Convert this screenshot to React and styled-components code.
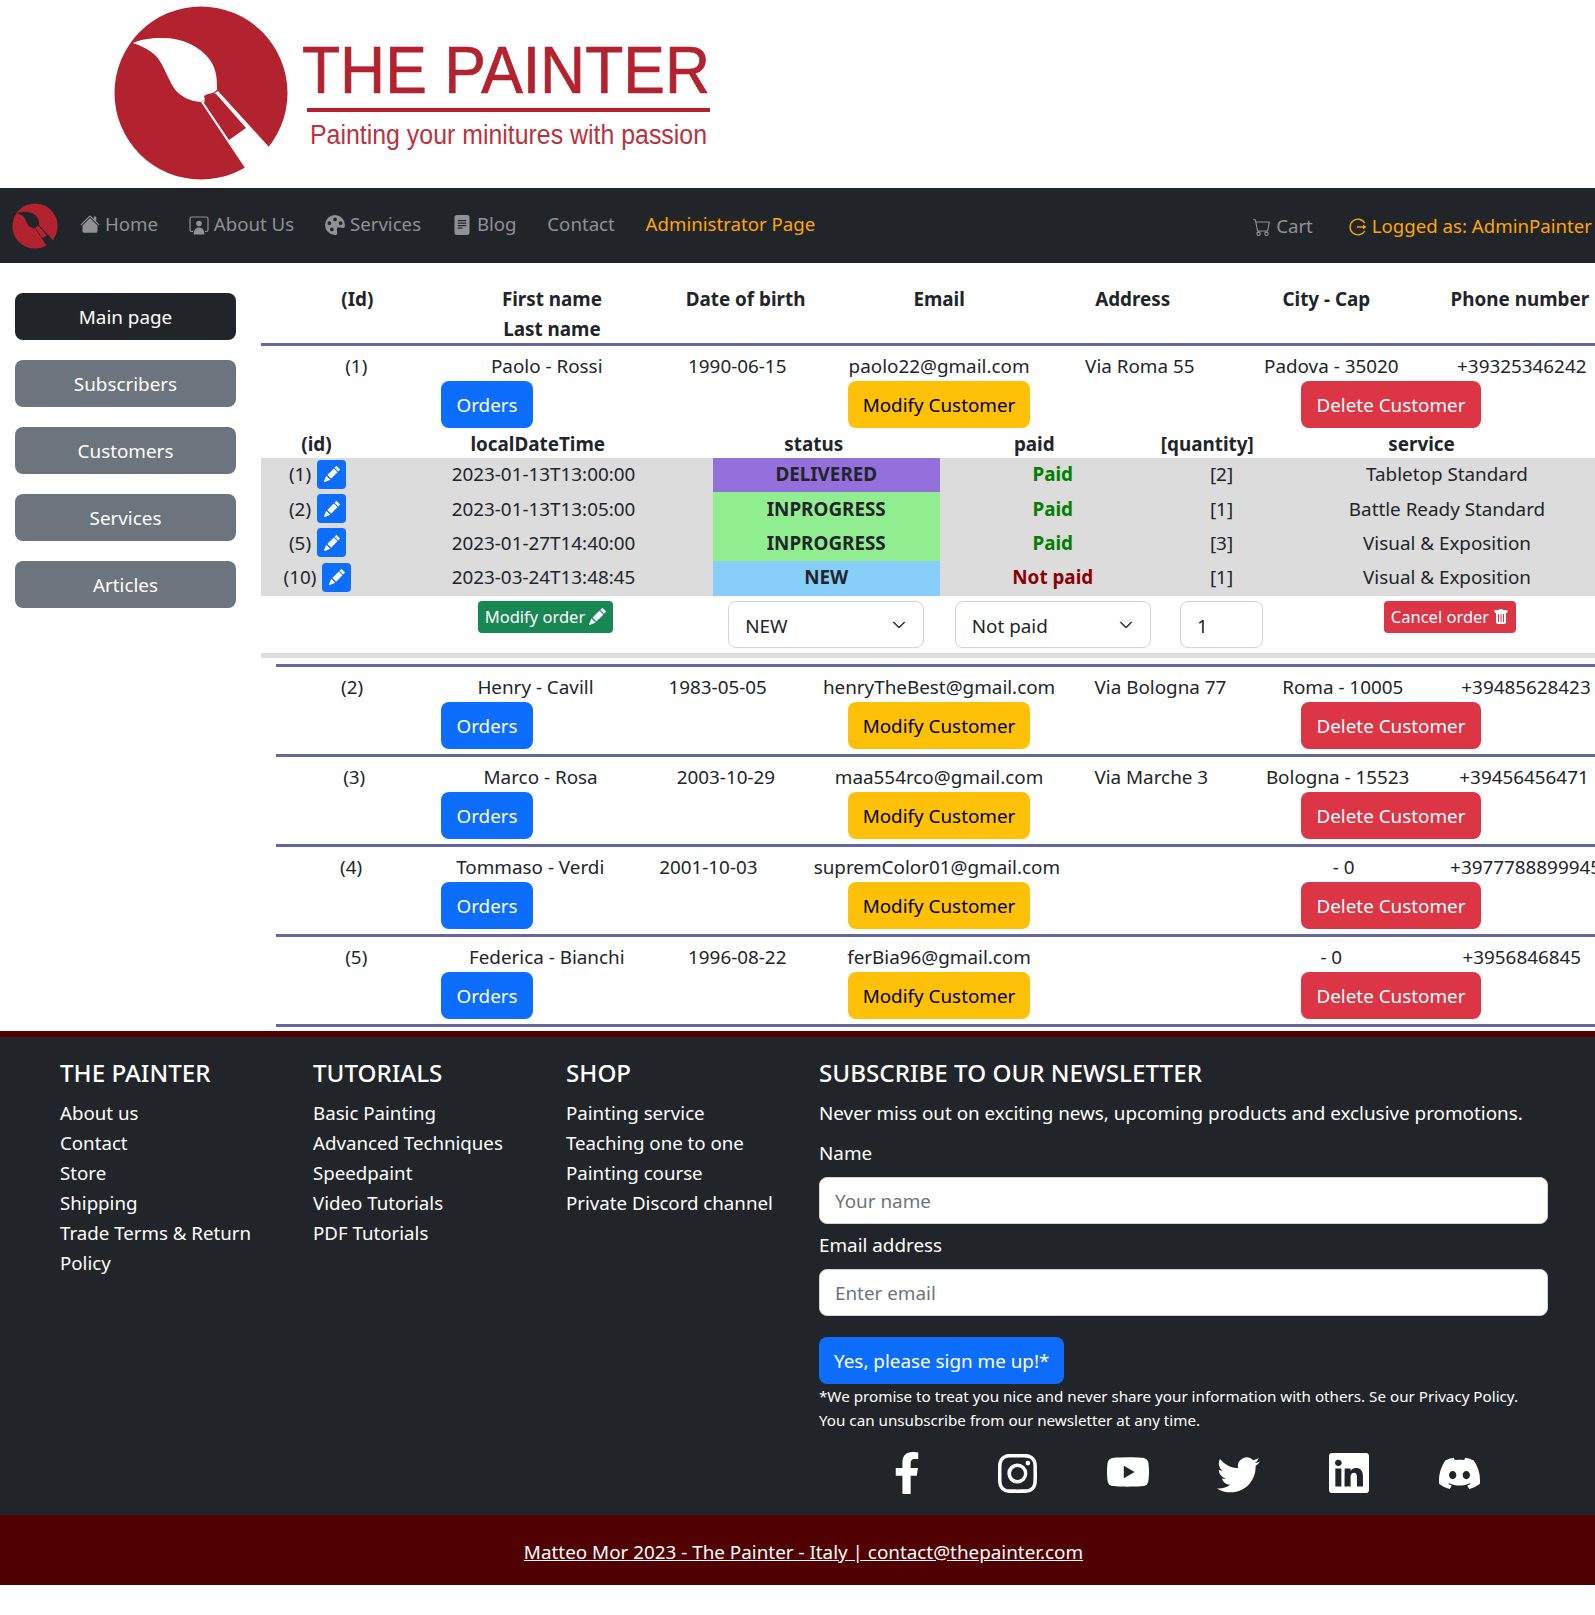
import React from 'react';
import styled, { createGlobalStyle } from 'styled-components';
import {
  BsHouseFill, BsPaletteFill, BsFileTextFill, BsCart,
  BsPencilFill, BsTrashFill, BsInstagram, BsYoutube, BsTwitter, BsLinkedin, BsDiscord, BsChevronDown,
} from 'react-icons/bs';
import { FaFacebookF } from 'react-icons/fa';

const Global = createGlobalStyle`
  html, body { margin: 0; padding: 0; background: #fff; }
  body { font-family: "Noto Sans", "Open Sans", sans-serif; font-size: 18.85px; line-height: 30px; color: #212529; }
  * { box-sizing: border-box; }
`;

const Page = styled.div`
  width: 1595px;
  height: 1615px;
  overflow: hidden;
`;

/* ---------- header ---------- */
const Brand = styled.header`
  height: 188px;
  padding-left: 100px;
`;
const LogoSvg = styled.svg`
  display: block;
`;
const LogoTitle = styled.text`
  font-family: "Liberation Sans", Arial, sans-serif;
  font-size: 66px;
  fill: #b2222f;
  stroke: #b2222f;
  stroke-width: 0.7px;
`;
const LogoTag = styled.text`
  font-family: "Liberation Sans", Arial, sans-serif;
  font-size: 27px;
  fill: #b2222f;
  opacity: 0.92;
`;

function BrushMark({ cut }) {
  return (
    <g>
      <circle cx="101" cy="93" r="86.5" fill="#b2222f" />
      <path
        d="M33 43 C45 38 55 38 63 38 C82 38 100 46 110 60 C117 70 117 80 117 90 L101 102 C90 101 80 97 74 88 C67 77 64 66 57 57 C50 50 42 46 33 43 Z"
        fill={cut}
      />
      <path d="M101 102 L118 91 L168 146 L205 185 L190 200 L145 168 Z" fill={cut} />
      <path
        d="M105 99 C103 96 105 95 108 94 L113 93 C115 93 116 94 117 95 L146 128 L129 140 L104 103 Z"
        fill="#b2222f"
      />
    </g>
  );
}

const ExitMark = () => (
  <svg width="18" height="18" viewBox="0 0 18 18" fill="none" stroke="currentColor" strokeWidth="1.4">
    <path d="M15.8 5 A7.9 7.9 0 1 0 15.8 13" />
    <path d="M8 9 H16.5" />
    <path d="M14 7 L16.5 9 L14 11" fill="currentColor" strokeWidth="1" />
  </svg>
);

const ProfileMark = () => (
  <svg width="20" height="20" viewBox="0 0 20 20" fill="currentColor">
    <path
      d="M4 16.5 H2.8 C1.8 16.5 1 15.7 1 14.7 V3.8 C1 2.8 1.8 2 2.8 2 H17.2 C18.2 2 19 2.8 19 3.8 V14.7 C19 15.7 18.2 16.5 17.2 16.5 H16"
      fill="none"
      stroke="currentColor"
      strokeWidth="1.2"
    />
    <circle cx="10" cy="8.5" r="2.8" />
    <path d="M4.6 19.5 C4.8 14.6 7 12.6 10 12.6 C13 12.6 15.2 14.6 15.4 19.5 Z" />
  </svg>
);

/* ---------- nav ---------- */
const Nav = styled.nav`
  height: 75px;
  background: #212529;
  display: flex;
  align-items: center;
  padding: 0 3px 0 12px;
  font-size: 18.65px;
`;
const NavMark = styled.svg`
  flex: none;
  margin-right: 22px;
`;
const NavLinks = styled.div`
  display: flex;
  align-items: center;
  gap: 30.8px;
  margin-bottom: 4px;
`;
const NavRight = styled.div`
  margin-left: auto;
  display: flex;
  align-items: center;
  gap: 36px;
`;
const NavLink = styled.a`
  display: flex;
  align-items: center;
  gap: 5px;
  color: ${(p) => (p.$accent ? '#ffa500' : '#8f9194')};
  white-space: nowrap;
`;
const NavIconSlot = styled.span`
  display: flex;
  margin-top: ${(p) => p.$drop || 0}px;
`;

/* ---------- main ---------- */
const Main = styled.main`
  display: flex;
  height: 768px;
`;
const Sidebar = styled.aside`
  flex: 0 0 261px;
  display: flex;
  flex-direction: column;
  gap: 20px;
  padding: 30px 25px 0 15px;
`;
const SideButton = styled.button`
  height: 47px;
  border: 0;
  border-radius: 8px;
  font: inherit;
  color: #fff;
  background: ${(p) => (p.$active ? '#212529' : '#6c757d')};
`;
const Content = styled.section`
  flex: 0 0 1356px;
  padding-top: 21px;
`;
const Cols = styled.div`
  display: grid;
  grid-template-columns: ${(p) => p.$cols};
`;
const HeadRow = styled(Cols)`
  margin-bottom: -1px;
`;
const Cell = styled.div`
  display: flex;
  justify-content: center;
  align-items: center;
  white-space: nowrap;
  min-width: 0;
`;
const HeadCell = styled.div`
  text-align: center;
  font-weight: 700;
  white-space: nowrap;
`;
const Rule = styled.div`
  height: 3px;
  background: #6466a6;
  margin-left: ${(p) => p.$inset}px;
  margin-right: -10px;
`;
const CustomerRow = styled.div`
  padding: 5px 0 5px;
`;
const ActionRow = styled.div`
  display: grid;
  grid-template-columns: repeat(3, 452px);
  justify-items: center;
`;
const LgButton = styled.button`
  height: 47px;
  padding: 0 15px;
  border: 0;
  border-radius: 8px;
  font: inherit;
  white-space: nowrap;
  color: ${(p) => (p.$tone === 'warn' ? '#000' : '#fff')};
  background: ${(p) => ({ blue: '#0d6efd', warn: '#ffc107', red: '#dc3545' }[p.$tone])};
`;

/* orders */
const OrdersHead = styled(Cols)`
  height: 30px;
  padding-top: 1px;
`;
const OrderRows = styled.div`
  background: #dcdcdc;
`;
const OrderRow = styled(Cols)`
  height: 34.4px;
  & > * { padding-bottom: 2px; }
`;
const IdGroup = styled.div`
  display: flex;
  align-items: center;
  justify-content: center;
  gap: 6px;
`;
const PencilButton = styled.button`
  width: 29px;
  height: 29px;
  border: 0;
  border-radius: 4px;
  background: #0d6efd;
  color: #fff;
  display: flex;
  align-items: center;
  justify-content: center;
  padding: 0;
`;
const StatusCell = styled(Cell)`
  font-weight: 700;
  background: ${(p) => ({ DELIVERED: '#9370db', INPROGRESS: '#90ee90', NEW: '#87cefa' }[p.$status])};
`;
const PaidCell = styled(Cell)`
  font-weight: 700;
  color: ${(p) => (p.$paid ? '#008000' : '#8b0000')};
`;
const EditRow = styled(Cols)`
  height: 57.4px;
  padding-top: 5px;
  align-items: start;
`;
const SmallButton = styled.button`
  display: flex;
  align-items: center;
  gap: 4px;
  height: 32px;
  padding: 0 7px;
  margin-left: ${(p) => p.$shift || 0}px;
  border: 0;
  border-radius: 4px;
  font: inherit;
  font-size: 16.5px;
  color: #fff;
  white-space: nowrap;
  background: ${(p) => (p.$tone === 'red' ? '#dc3545' : '#198754')};
`;
const SelectWrap = styled.div`
  position: relative;
  width: ${(p) => p.$w}px;
  height: 47px;
`;
const Select = styled.select`
  appearance: none;
  width: 100%;
  height: 100%;
  padding: 3px 16px 0;
  background: #fff;
  border: 1px solid #ced4da;
  border-radius: 8px;
  font: inherit;
  color: #212529;
`;
const Caret = styled.span`
  position: absolute;
  right: 18px;
  top: 9px;
  pointer-events: none;
  color: #343a40;
`;
const QtyInput = styled.input`
  width: 83px;
  height: 47px;
  padding: 3px 16px 0;
  border: 1px solid #ced4da;
  border-radius: 8px;
  font: inherit;
  color: #212529;
`;
const Band = styled.div`
  height: 5px;
  background: #dcdcdc;
  margin: 0 -10px 1.5px 0;
`;

/* ---------- footer ---------- */
const Footer = styled.footer`
  height: 484px;
  background: #212529;
  border-top: 6px solid #500000;
  color: #fff;
  padding: 19px 47px 0 60px;
  display: grid;
  grid-template-columns: 253px 253px 253px 1fr;
`;
const FootCol = styled.div`
  padding-right: 24px;
`;
const FootTitle = styled.h5`
  margin: 0;
  font-size: 24.2px;
  font-weight: 500;
  line-height: 33px;
  white-space: nowrap;
`;
const FootLinks = styled.ul`
  list-style: none;
  margin: 9px 0 0;
  padding: 0;
  font-size: 18.7px;
`;
const NewsCol = styled.div``;
const NewsText = styled.p`
  margin: 9px 0 0;
  white-space: nowrap;
`;
const TextField = styled.input`
  display: block;
  width: 100%;
  height: 47px;
  margin-top: 9px;
  padding: 1px 15px 0;
  background: #fff;
  border: 1px solid #ced4da;
  border-radius: 8px;
  font: inherit;
  &::placeholder { color: #6c757d; opacity: 1; }
`;
const FieldLabel = styled.label`
  display: block;
  margin-top: 10px;
  height: 30px;
  ${TextField} + & { margin-top: 6px; }
`;
const SignUp = styled(LgButton)`
  display: block;
  margin-top: 21px;
`;
const Fine = styled.p`
  margin: 0;
  font-size: 15.2px;
  line-height: 24px;
  white-space: nowrap;
`;
const Social = styled.div`
  display: flex;
  justify-content: flex-start;
  margin-top: 20px;
  padding-left: 33px;
`;
const SocialSlot = styled.a`
  flex: 0 0 110.5px;
  width: 110.5px;
  height: 42px;
  display: flex;
  align-items: center;
  justify-content: center;
  color: #fff;
`;
const Legal = styled.div`
  height: 70px;
  background: #500000;
  color: #fff;
  display: flex;
  align-items: center;
  justify-content: center;
  padding: 3px 0 0 12px;
`;
const LegalLink = styled.a`
  color: #fff;
  text-decoration: underline;
`;

/* ---------- data ---------- */
const K = 1.0297;
const colsFromCenters = (centers, left = 253.5) => {
  let edge = left;
  return centers
    .map((c) => {
      const w = 2 * (c - edge);
      edge += w;
      return `${(w * K).toFixed(1)}px`;
    })
    .join(' ');
};

const customers = [
  { id: 1, name: 'Paolo - Rossi', dob: '1990-06-15', email: 'paolo22@gmail.com', addr: 'Via Roma 55', city: 'Padova - 35020', phone: '+39325346242', centers: [346, 531, 716, 912, 1107, 1293, 1478] },
  { id: 2, name: 'Henry - Cavill', dob: '1983-05-05', email: 'henryTheBest@gmail.com', addr: 'Via Bologna 77', city: 'Roma - 10005', phone: '+39485628423', centers: [342, 520, 697, 912, 1127, 1304, 1482] },
  { id: 3, name: 'Marco - Rosa', dob: '2003-10-29', email: 'maa554rco@gmail.com', addr: 'Via Marche 3', city: 'Bologna - 15523', phone: '+39456456471', centers: [344, 525, 705, 912, 1118, 1299, 1480] },
  { id: 4, name: 'Tommaso - Verdi', dob: '2001-10-03', email: 'supremColor01@gmail.com', addr: '', city: ' - 0', phone: '+39777888999451', centers: [341, 515, 688, 910, 1130, 1305, 1487] },
  { id: 5, name: 'Federica - Bianchi', dob: '1996-08-22', email: 'ferBia96@gmail.com', addr: '', city: ' - 0', phone: '+3956846845', centers: [346, 531, 716, 912, 1107, 1293, 1478] },
];

const orders = [
  { id: 1, at: '2023-01-13T13:00:00', status: 'DELIVERED', paid: true, qty: 2, service: 'Tabletop Standard' },
  { id: 2, at: '2023-01-13T13:05:00', status: 'INPROGRESS', paid: true, qty: 1, service: 'Battle Ready Standard' },
  { id: 5, at: '2023-01-27T14:40:00', status: 'INPROGRESS', paid: true, qty: 3, service: 'Visual & Exposition' },
  { id: 10, at: '2023-03-24T13:48:45', status: 'NEW', paid: false, qty: 1, service: 'Visual & Exposition' },
];

const headCols = colsFromCenters([347, 536, 724, 912, 1100, 1288, 1476]);
const orderHeadCols = '111px 331.5px 220.5px 220.5px 125.5px 303px';
const orderBodyCols = '113px 339px 226.5px 226.5px 111px 340px';

const footerCols = [
  { title: 'THE PAINTER', links: ['About us', 'Contact', 'Store', 'Shipping', 'Trade Terms & Return Policy'] },
  { title: 'TUTORIALS', links: ['Basic Painting', 'Advanced Techniques', 'Speedpaint', 'Video Tutorials', 'PDF Tutorials'] },
  { title: 'SHOP', links: ['Painting service', 'Teaching one to one', 'Painting course', 'Private Discord channel'] },
];

function Customer({ c, children }) {
  return (
    <CustomerRow>
      <Cols $cols={colsFromCenters(c.centers)}>
        <Cell>({c.id})</Cell>
        <Cell>{c.name}</Cell>
        <Cell>{c.dob}</Cell>
        <Cell>{c.email}</Cell>
        <Cell>{c.addr}</Cell>
        <Cell>{c.city}</Cell>
        <Cell>{c.phone}</Cell>
      </Cols>
      <ActionRow>
        <LgButton $tone="blue">Orders</LgButton>
        <LgButton $tone="warn">Modify Customer</LgButton>
        <LgButton $tone="red">Delete Customer</LgButton>
      </ActionRow>
      {children}
    </CustomerRow>
  );
}

function Orders() {
  return (
    <>
      <OrdersHead $cols={orderHeadCols}>
        <HeadCell>(id)</HeadCell>
        <HeadCell>localDateTime</HeadCell>
        <HeadCell>status</HeadCell>
        <HeadCell>paid</HeadCell>
        <HeadCell>[quantity]</HeadCell>
        <HeadCell>service</HeadCell>
      </OrdersHead>
      <OrderRows>
        {orders.map((o) => (
          <OrderRow key={o.id} $cols={orderBodyCols}>
            <IdGroup>
              ({o.id})
              <PencilButton aria-label="edit"><BsPencilFill size={16} /></PencilButton>
            </IdGroup>
            <Cell>{o.at}</Cell>
            <StatusCell $status={o.status}>{o.status}</StatusCell>
            <PaidCell $paid={o.paid}>{o.paid ? 'Paid' : 'Not paid'}</PaidCell>
            <Cell>[{o.qty}]</Cell>
            <Cell>{o.service}</Cell>
          </OrderRow>
        ))}
      </OrderRows>
      <EditRow $cols={orderBodyCols}>
        <span />
        <Cell>
          <SmallButton $shift={4}>Modify order <BsPencilFill size={17} /></SmallButton>
        </Cell>
        <Cell>
          <SelectWrap $w={196}>
            <Select defaultValue="NEW"><option>NEW</option><option>INPROGRESS</option><option>DELIVERED</option></Select>
            <Caret><BsChevronDown size={14} strokeWidth={1} /></Caret>
          </SelectWrap>
        </Cell>
        <Cell>
          <SelectWrap $w={196}>
            <Select defaultValue="Not paid"><option>Not paid</option><option>Paid</option></Select>
            <Caret><BsChevronDown size={14} strokeWidth={1} /></Caret>
          </SelectWrap>
        </Cell>
        <Cell><QtyInput defaultValue="1" /></Cell>
        <Cell>
          <SmallButton $tone="red" $shift={6}>Cancel order <BsTrashFill size={16} /></SmallButton>
        </Cell>
      </EditRow>
      <Band />
    </>
  );
}

export default function App() {
  return (
    <Page>
      <Global />
      <Brand>
        <LogoSvg width="620" height="188" viewBox="0 0 620 188">
          <BrushMark cut="#fff" />
          <LogoTitle x="202" y="93" textLength="408" lengthAdjust="spacingAndGlyphs">THE PAINTER</LogoTitle>
          <rect x="207" y="108" width="403" height="4" fill="#b2222f" />
          <LogoTag x="210" y="144" textLength="397" lengthAdjust="spacingAndGlyphs">Painting your minitures with passion</LogoTag>
        </LogoSvg>
      </Brand>

      <Nav>
        <NavMark width="46" height="46" viewBox="13 5 176 176">
          <BrushMark cut="#212529" />
        </NavMark>
        <NavLinks>
          <NavLink><NavIconSlot><BsHouseFill size={20} /></NavIconSlot>Home</NavLink>
          <NavLink><NavIconSlot $drop={2}><ProfileMark /></NavIconSlot>About Us</NavLink>
          <NavLink><NavIconSlot $drop={2}><BsPaletteFill size={20} /></NavIconSlot>Services</NavLink>
          <NavLink><NavIconSlot $drop={2}><BsFileTextFill size={20} /></NavIconSlot>Blog</NavLink>
          <NavLink>Contact</NavLink>
          <NavLink $accent>Administrator Page</NavLink>
        </NavLinks>
        <NavRight>
          <NavLink><NavIconSlot $drop={3}><BsCart size={18} /></NavIconSlot>Cart</NavLink>
          <NavLink $accent><NavIconSlot $drop={2}><ExitMark /></NavIconSlot>Logged as: AdminPainter</NavLink>
        </NavRight>
      </Nav>

      <Main>
        <Sidebar>
          <SideButton $active>Main page</SideButton>
          <SideButton>Subscribers</SideButton>
          <SideButton>Customers</SideButton>
          <SideButton>Services</SideButton>
          <SideButton>Articles</SideButton>
        </Sidebar>
        <Content>
          <HeadRow $cols={headCols}>
            <HeadCell>(Id)</HeadCell>
            <HeadCell>First name<br />Last name</HeadCell>
            <HeadCell>Date of birth</HeadCell>
            <HeadCell>Email</HeadCell>
            <HeadCell>Address</HeadCell>
            <HeadCell>City - Cap</HeadCell>
            <HeadCell>Phone number</HeadCell>
          </HeadRow>
          <Rule $inset={0} />
          <Customer c={customers[0]}>
            <Orders />
          </Customer>
          {customers.slice(1).map((c) => (
            <React.Fragment key={c.id}>
              <Rule $inset={15} />
              <Customer c={c} />
            </React.Fragment>
          ))}
          <Rule $inset={15} />
        </Content>
      </Main>

      <Footer>
        {footerCols.map((col) => (
          <FootCol key={col.title}>
            <FootTitle>{col.title}</FootTitle>
            <FootLinks>
              {col.links.map((l) => <li key={l}>{l}</li>)}
            </FootLinks>
          </FootCol>
        ))}
        <NewsCol>
          <FootTitle>SUBSCRIBE TO OUR NEWSLETTER</FootTitle>
          <NewsText>Never miss out on exciting news, upcoming products and exclusive promotions.</NewsText>
          <FieldLabel>Name</FieldLabel>
          <TextField placeholder="Your name" />
          <FieldLabel>Email address</FieldLabel>
          <TextField placeholder="Enter email" />
          <SignUp $tone="blue">Yes, please sign me up!*</SignUp>
          <Fine>*We promise to treat you nice and never share your information with others. Se our Privacy Policy.<br />You can unsubscribe from our newsletter at any time.</Fine>
          <Social>
            <SocialSlot><FaFacebookF size={42} /></SocialSlot>
            <SocialSlot><BsInstagram size={39} /></SocialSlot>
            <SocialSlot><BsYoutube size={42} /></SocialSlot>
            <SocialSlot><BsTwitter size={43} /></SocialSlot>
            <SocialSlot><BsLinkedin size={40} /></SocialSlot>
            <SocialSlot><BsDiscord size={41} /></SocialSlot>
          </Social>
        </NewsCol>
      </Footer>
      <Legal>
        <LegalLink>Matteo Mor 2023 - The Painter - Italy | contact@thepainter.com</LegalLink>
      </Legal>
    </Page>
  );
}
